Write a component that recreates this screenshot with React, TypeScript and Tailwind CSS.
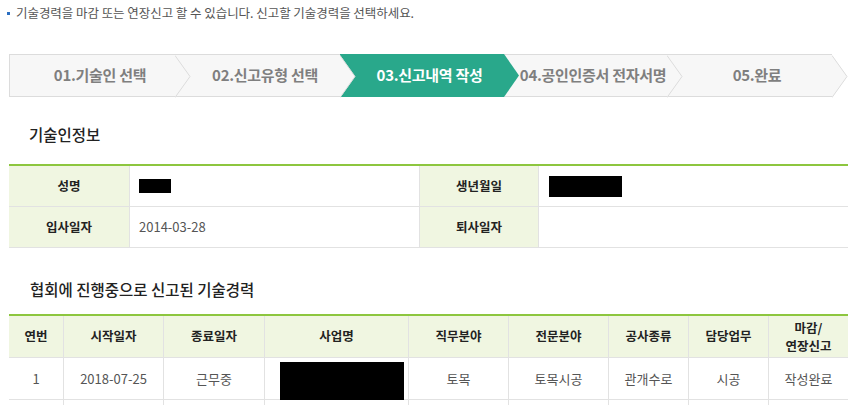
import React from 'react'

const font = { fontFamily: '"Noto Sans CJK KR", "Noto Sans", sans-serif' }

const steps = [
  { label: '01.기술인 선택', w: 'w-[166px]' },
  { label: '02.신고유형 선택', w: 'w-[165px]' },
  { label: '03.신고내역 작성', w: 'w-[164px]', active: true },
  { label: '04.공인인증서 전자서명', w: 'w-[163px]' },
  { label: '05.완료', w: 'w-[165px]' },
]

function Chevron({ active }: { active?: boolean }) {
  return (
    <svg
      className="absolute top-0 left-full z-10"
      width="16"
      height="43"
      viewBox="0 0 16 43"
    >
      <polygon points="0,0 15,21.5 0,43" fill={active ? '#29a88b' : '#f7f7f7'} />
      {!active && (
        <polyline points="0,0.5 15,21.5 0,42.5" fill="none" stroke="#dcdcdc" strokeWidth="1" />
      )}
    </svg>
  )
}

function StepBar() {
  return (
    <div className="flex h-[43px]">
      {steps.map((s, i) => (
        <div
          key={s.label}
          className={`relative ${s.w} flex items-center justify-center pl-[15px] text-[15px] font-bold ${
            s.active
              ? 'bg-[#29a88b] text-white'
              : 'bg-[#f7f7f7] text-[#7f7f7f] border-y border-[#dcdcdc]'
          } ${i === 0 ? 'border-l' : ''}`}
        >
          <span className="whitespace-nowrap tracking-[-0.3px]">{s.label}</span>
          <Chevron active={s.active} />
        </div>
      ))}
    </div>
  )
}

function Redact({ w, h }: { w: string; h: string }) {
  return <span className={`inline-block bg-black ${w} ${h}`} />
}

function InfoTable() {
  const label = 'bg-[#f0f6e1] font-bold text-[12.5px] text-[#222] flex items-center justify-center border-b border-r border-[#e2e2e2]'
  const value = 'bg-white text-[13px] text-[#555] flex items-center px-[9px] border-b border-r border-[#e2e2e2]'
  return (
    <div className="grid grid-cols-[121px_290px_119px_309px] border-t-2 border-[#8dc63f]">
      <div className={`${label} h-[41px]`}>성명</div>
      <div className={`${value} h-[41px]`}>
        <Redact w="w-[32px]" h="h-[14px]" />
      </div>
      <div className={`${label} h-[41px]`}>생년월일</div>
      <div className={`${value} h-[41px] pl-[10px] border-r-0`}>
        <Redact w="w-[73px]" h="h-[21px]" />
      </div>
      <div className={`${label} h-[41px]`}>입사일자</div>
      <div className={`${value} h-[41px]`}>2014-03-28</div>
      <div className={`${label} h-[41px]`}>퇴사일자</div>
      <div className={`${value} h-[41px] border-r-0`}></div>
    </div>
  )
}

const headers = ['연번', '시작일자', '종료일자', '사업명', '직무분야', '전문분야', '공사종류', '담당업무']

function CareerTable() {
  const th = 'bg-[#f0f6e1] font-bold text-[12.5px] text-[#222] flex items-center justify-center text-center border-b border-r border-[#e2e2e2] h-[42px]'
  const td = 'bg-white text-[13px] text-[#555] flex items-center justify-center border-b border-r border-[#e2e2e2] h-[42px]'
  const row = ['1', '2018-07-25', '근무중', null, '토목', '토목시공', '관개수로', '시공', '작성완료']
  return (
    <div className="grid grid-cols-[55px_100px_101px_144px_100px_100px_80px_80px_79px] border-t-2 border-[#8dc63f]">
      {headers.map((h) => (
        <div key={h} className={th}>{h}</div>
      ))}
      <div className={`${th} border-r-0 leading-[18px]`}>
        <span>
          마감/
          <br />
          연장신고
        </span>
      </div>
      {row.map((c, i) => (
        <div key={i} className={`${td} ${i === 8 ? 'border-r-0' : ''}`}>
          {c === null ? (
            <div className="w-full h-full pt-[4px] pl-[15px]">
              <Redact w="w-[124px]" h="h-[38px]" />
            </div>
          ) : (
            c
          )}
        </div>
      ))}
      {row.map((_, i) => (
        <div key={`e${i}`} className={`${td} ${i === 8 ? 'border-r-0' : ''}`} />
      ))}
    </div>
  )
}

export default function App() {
  return (
    <div className="w-[855px] h-[405px] overflow-hidden bg-white" style={font}>
      <div className="pl-[9px] w-[848px]">
        <div className="flex items-center h-[26px] text-[12.5px] text-[#555]">
          <span className="w-[3px] h-[3px] bg-[#2b6fc2] mr-[6px] -ml-[2px]" />
          <span className="tracking-[-0.05px]">
            기술경력을 마감 또는 연장신고 할 수 있습니다. 신고할 기술경력을 선택하세요.
          </span>
        </div>
        <div className="mt-[28px]">
          <StepBar />
        </div>
        <h3 className="mt-[24px] pl-[20px] text-[15.5px] font-medium text-[#222] h-[27px] flex items-center">
          기술인정보
        </h3>
        <div className="mt-[16px]">
          <InfoTable />
        </div>
        <h3 className="mt-[28px] pl-[21px] text-[15.5px] font-medium text-[#222] h-[27px] flex items-center">
          협회에 진행중으로 신고된 기술경력
        </h3>
        <div className="mt-[11px]">
          <CareerTable />
        </div>
      </div>
    </div>
  )
}
